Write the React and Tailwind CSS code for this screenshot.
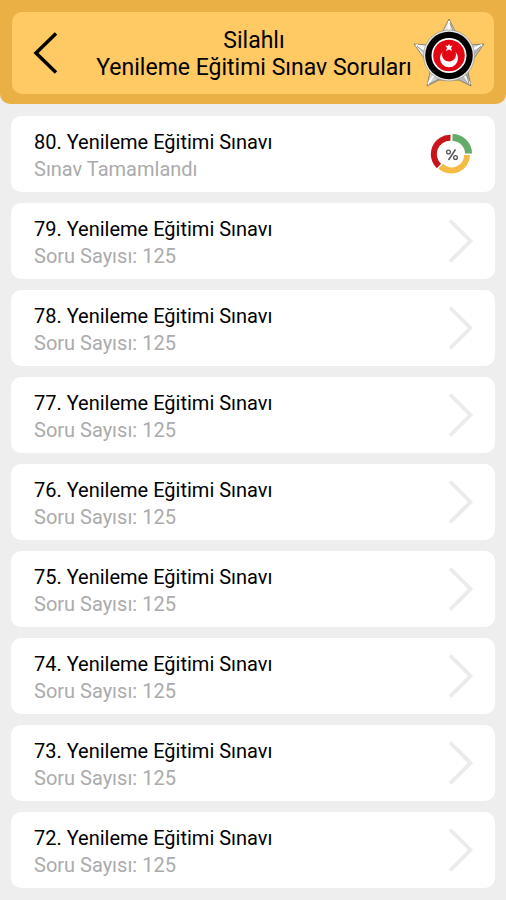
import React from 'react';

const exams = [
  { id: 80, completed: true },
  { id: 79, questions: 125 },
  { id: 78, questions: 125 },
  { id: 77, questions: 125 },
  { id: 76, questions: 125 },
  { id: 75, questions: 125 },
  { id: 74, questions: 125 },
  { id: 73, questions: 125 },
  { id: 72, questions: 125 },
];

const BackIcon = () => (
  <svg width="26" height="44" viewBox="0 0 26 44" fill="none" aria-hidden="true">
    <path d="M23 2.500L3 22L23 41.500" stroke="#000" strokeWidth="3.500" strokeLinecap="butt" strokeLinejoin="miter" />
  </svg>
);

const ChevronIcon = () => (
  <svg width="26" height="44" viewBox="0 0 26 44" fill="none" aria-hidden="true">
    <path d="M2 1.500L22.500 22L2 42.500" stroke="#ebebeb" strokeWidth="3.800" />
  </svg>
);

const Badge = () => (
  <svg className="shrink-0" width="72" height="72" viewBox="0 0 72 72" role="img" aria-label="Rozet">
    <defs>
      <linearGradient id="silver" x1="0" y1="0" x2="1" y2="1">
        <stop offset="0" stopColor="#ffffff" />
        <stop offset="0.5" stopColor="#dcdcdc" />
        <stop offset="1" stopColor="#a3a3a3" />
      </linearGradient>
    </defs>
    <path
      d="M36 2L43 16L57 28L71 27L61 41L55 55L58 69L46 63H26L14 69L17 55L11 41L1 27L15 28L29 16Z"
      fill="url(#silver)"
      stroke="#77705f"
      strokeWidth="0.8"
    />
    <path d="M36 4V18M69 28L56 34M57 67L49 55M15 67L23 55M3 28L16 34" stroke="#fff" strokeWidth="2" />
    <path d="M37 6L42 18M68 29L59 39M56 67L53 54M16 67L28 61M4 29L13 37" stroke="#8d8d8d" strokeWidth="1" />
    <circle cx="36" cy="38.500" r="25.500" fill="#e9e9e9" stroke="#8f8b80" strokeWidth="0.6" />
    <circle cx="36" cy="38.500" r="23.800" fill="#000" />
    <circle cx="36" cy="38.500" r="17.500" fill="#fff" />
    <circle cx="36" cy="38.500" r="15.800" fill="#e30613" />
    <path d="M29.500 35A9 9 0 1 0 42.500 35A7 7 0 1 1 29.500 35Z" fill="#fff" />
    <path d="M36 27L37 29L39.500 28.500L38 31L39 34L36 32.500L33 34L34 31L32.500 28.500L35 29Z" fill="#fff" />
  </svg>
);

const ResultIcon = () => (
  <svg width="44" height="44" viewBox="0 0 44 44" fill="none" role="img" aria-label="Sonuç yüzdesi">
    <path d="M20.500 5.800A16.300 16.300 0 0 0 9 34" stroke="#c9141b" strokeWidth="6" />
    <path d="M9 36A18 18 0 0 0 38.500 23.500" stroke="#eda720" strokeWidth="1.500" />
    <path d="M11 34A15.300 15.300 0 0 0 37 23" stroke="#f6bb42" strokeWidth="6" />
    <path d="M22.500 5.500A16 16 0 0 1 38.500 21.500" stroke="#65ac6b" strokeWidth="7" />
    <circle cx="18.500" cy="20" r="1.900" stroke="#555" strokeWidth="1.300" />
    <circle cx="25.500" cy="25.500" r="1.900" stroke="#555" strokeWidth="1.300" />
    <path d="M25.500 17.500L18.500 28" stroke="#555" strokeWidth="1.500" />
  </svg>
);

const ExamRow = ({ exam }) => (
  <li>
    <button
      type="button"
      className="flex h-19 w-full items-center justify-between rounded-[10px] bg-white pr-[21px] pl-[23px] text-left"
    >
      <span className="block pt-[3px] text-xl leading-[27px]">
        <span className="block text-black">{exam.id}. Yenileme Eğitimi Sınavı</span>
        <span className="block text-[#ababab]">
          {exam.completed ? 'Sınav Tamamlandı' : `Soru Sayısı: ${exam.questions}`}
        </span>
      </span>
      {exam.completed ? <ResultIcon /> : <ChevronIcon />}
    </button>
  </li>
);

const App = () => {
  return (
    <div className="min-h-screen bg-[#eeeeee] font-[Roboto,sans-serif]">
      <header className="rounded-b-[10px] bg-[#eab045] px-3 pt-3 pb-2.5">
        <div className="flex h-[82px] items-center rounded-[10px] bg-[#ffc963] pr-[9px]">
          <button type="button" aria-label="Geri" className="flex h-full w-[83px] shrink-0 items-center pl-[21px]">
            <BackIcon />
          </button>
          <h1 className="flex-1 pt-0.5 text-center text-[23px] leading-[27px] whitespace-nowrap text-black">
            Silahlı
            <br />
            Yenileme Eğitimi Sınav Soruları
          </h1>
          <Badge />
        </div>
      </header>
      <main className="px-[11px] py-3">
        <ul className="flex flex-col gap-[11px]">
          {exams.map((exam) => (
            <ExamRow key={exam.id} exam={exam} />
          ))}
        </ul>
      </main>
    </div>
  );
};

export default App;
